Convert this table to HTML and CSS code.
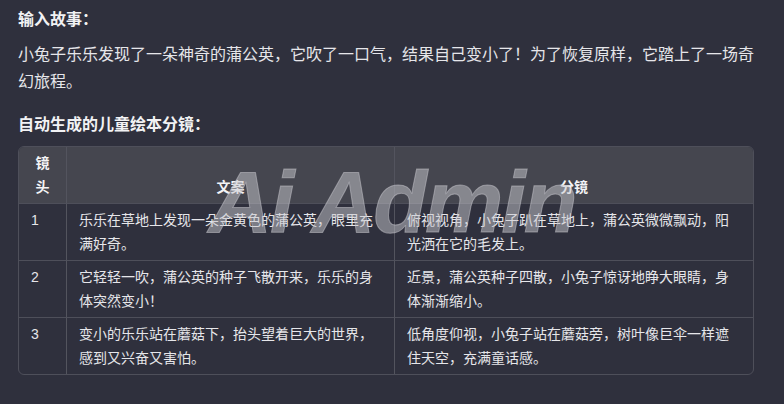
FILE: index.html
```
<!DOCTYPE html>
<html lang="zh-CN">
<head>
  <meta charset="UTF-8" />
  <title>儿童绘本分镜</title>
  <link rel="stylesheet" href="styles.css">
</head>
<body>
  <div class="content">
    <h3>输入故事：</h3>
    <p class="story">小兔子乐乐发现了一朵神奇的蒲公英，它吹了一口气，结果自己变小了！为了恢复原样，它踏上了一场奇幻旅程。</p>

    <h3>自动生成的儿童绘本分镜：</h3>
    <div class="table-wrap">
      <table id="tablaDatos">
        <colgroup>
          <col class="col-no">
          <col class="col-text">
          <col>
        </colgroup>
        <thead>
          <tr>
            <th>镜头</th>
            <th>文案</th>
            <th>分镜</th>
          </tr>
        </thead>
        <tbody>
          <tr>
            <td>1</td>
            <td>乐乐在草地上发现一朵金黄色的蒲公英，眼里充满好奇。</td>
            <td>俯视视角，小兔子趴在草地上，蒲公英微微飘动，阳光洒在它的毛发上。</td>
          </tr>
          <tr>
            <td>2</td>
            <td>它轻轻一吹，蒲公英的种子飞散开来，乐乐的身体突然变小！</td>
            <td>近景，蒲公英种子四散，小兔子惊讶地睁大眼睛，身体渐渐缩小。</td>
          </tr>
          <tr>
            <td>3</td>
            <td>变小的乐乐站在蘑菇下，抬头望着巨大的世界，感到又兴奋又害怕。</td>
            <td>低角度仰视，小兔子站在蘑菇旁，树叶像巨伞一样遮住天空，充满童话感。</td>
          </tr>
        </tbody>
      </table>
    </div>
  </div>

  <!-- 水印 -->
  <div class="watermark">Ai Admin</div>
</body>
</html>
```
FILE: styles.css
```
body {
  margin: 0;
  background-color: #2f303d;
  color: #e6e6ea;
  font-family: "Liberation Sans", "Noto Sans CJK SC", sans-serif;
}

.content {
  width: 736px;
  padding: 6px 0 0 18px;
}

h3 {
  margin: 0 0 8px;
  font-size: 16px;
  line-height: 27px;
  font-weight: bold;
  color: #f2f2f4;
}

.story {
  margin: 0 0 16px;
  font-size: 16px;
  line-height: 27px;
}

.table-wrap {
  border: 1px solid #4e4f5a;
  border-radius: 6px;
  overflow: hidden;
}

table {
  width: 734px;
  border-collapse: separate;
  border-spacing: 0;
  table-layout: fixed;
  font-size: 14px;
  line-height: 24px;
}

.col-no {
  width: 48px;
}

.col-text {
  width: 328px;
}

th, td {
  padding: 4px 12px;
  border-right: 1px solid #53545e;
  border-bottom: 1px solid #4e4f5a;
  height: 48px;
  text-align: left;
  vertical-align: top;
}

th:last-child, td:last-child {
  border-right: none;
}

tbody tr:last-child td {
  border-bottom: none;
}

th {
  background-color: #45464f;
  color: #f4f4f6;
  font-weight: bold;
  text-align: center;
  vertical-align: bottom;
}

/* 水印 */
.watermark {
  position: fixed;
  left: 0;
  top: 0;
  width: 100%;
  height: 100%;
  display: flex;
  align-items: center;
  justify-content: center;
  pointer-events: none;
  font-family: "Liberation Sans", sans-serif;
  font-size: 88px;
  line-height: 1;
  font-weight: bold;
  font-style: italic;
  letter-spacing: -2px;
  color: rgba(200, 200, 206, 0.5);
  -webkit-text-stroke: 1px rgba(200, 200, 206, 0.5);
}
```
